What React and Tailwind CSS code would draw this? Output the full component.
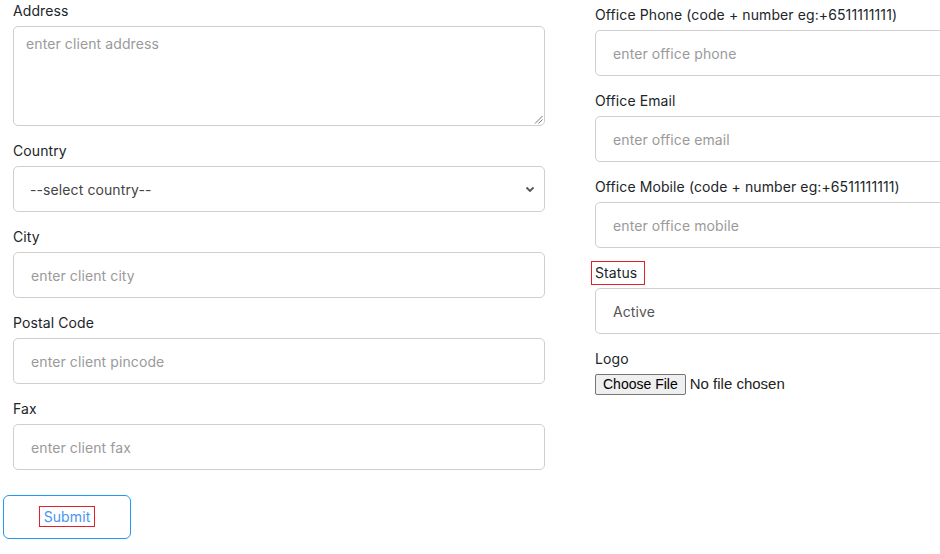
import React from "react";

const font = { fontFamily: "Inter, 'Noto Sans', sans-serif" };

function Label({ children }) {
  return <div className="h-[20px] leading-[20px] text-[14px] tracking-[0.1px] text-[#212529] mb-[5px]">{children}</div>;
}

function Input({ placeholder }) {
  return (
    <div className="h-[46px] border border-[#cfcfcf] rounded-[5px] bg-white flex items-center pl-[17px] text-[14px] tracking-[0.1px] text-[#9a9a9a]">
      {placeholder}
    </div>
  );
}

function Field({ label, placeholder, last }) {
  return (
    <div className={last ? "" : "mb-[15px]"}>
      <Label>{label}</Label>
      <Input placeholder={placeholder} />
    </div>
  );
}

export default function App() {
  return (
    <div className="w-[940px] h-[554px] overflow-hidden bg-white relative" style={font}>
      <div className="flex w-[1200px]">
        {/* Left column */}
        <div className="w-[532px] ml-[13px] pt-[1px] shrink-0">
          <div className="mb-[15px]">
            <Label>Address</Label>
            <div className="relative h-[100px] border border-[#cfcfcf] rounded-[5px] bg-white pl-[12px] pt-[7px] text-[14px] tracking-[0.1px] leading-[20px] text-[#9a9a9a]">
              enter client address
              <svg className="absolute right-[1px] bottom-[1px]" width="9" height="9" viewBox="0 0 9 9">
                <line x1="8.5" y1="1" x2="1" y2="8.5" stroke="#777" strokeWidth="1" />
                <line x1="8.5" y1="4.5" x2="4.5" y2="8.5" stroke="#777" strokeWidth="1" />
              </svg>
            </div>
          </div>
          <div className="mb-[15px]">
            <Label>Country</Label>
            <div className="h-[46px] border border-[#cfcfcf] rounded-[5px] bg-white flex items-center justify-between pl-[16px] pr-[8px] text-[14px] tracking-[0.1px] text-[#444]">
              <span>--select country--</span>
              <svg width="12" height="12" viewBox="0 0 12 12">
                <path d="M2.5 4.5 L6 8 L9.5 4.5" fill="none" stroke="#555" strokeWidth="1.8" />
              </svg>
            </div>
          </div>
          <Field label="City" placeholder="enter client city" />
          <Field label="Postal Code" placeholder="enter client pincode" />
          <Field label="Fax" placeholder="enter client fax" last />
        </div>

        {/* Right column */}
        <div className="w-[532px] ml-[50px] pt-[5px] shrink-0">
          <Field label="Office Phone (code + number eg:+6511111111)" placeholder="enter office phone" />
          <Field label="Office Email" placeholder="enter office email" />
          <Field label="Office Mobile (code + number eg:+6511111111)" placeholder="enter office mobile" />
          <div className="mb-[15px]">
            <div className="h-[20px] mb-[5px] flex items-center">
              <span className="ml-[-4px] border border-[#e0202a] pl-[3px] pr-[7px] leading-[22px] text-[14px] tracking-[0.1px] text-[#212529]">Status</span>
            </div>
            <div className="h-[46px] border border-[#cfcfcf] rounded-[5px] bg-white flex items-center pl-[17px] text-[14px] tracking-[0.1px] text-[#555]">
              Active
            </div>
          </div>
          <div>
            <Label>Logo</Label>
            <div className="flex items-center h-[21px] mt-[1px]" style={{ fontFamily: "'Liberation Sans', Arial, sans-serif" }}>
              <span className="h-[21px] px-[7px] border border-[#767676] rounded-[2px] bg-[#efefef] text-[14px] leading-[19px] text-black">
                Choose File
              </span>
              <span className="ml-[4px] text-[15px] text-[#222]">No file chosen</span>
            </div>
          </div>
        </div>
      </div>

      <div className="mt-[25px] ml-[3px]">
        <div className="w-[128px] h-[44px] border border-[#2196f3] rounded-[6px] flex items-center justify-center">
          <span className="mt-[-1px] border border-[#e0202a] px-[4px] leading-[19px] text-[14px] tracking-[0.1px] text-[#4a94ee]">Submit</span>
        </div>
      </div>
    </div>
  );
}
